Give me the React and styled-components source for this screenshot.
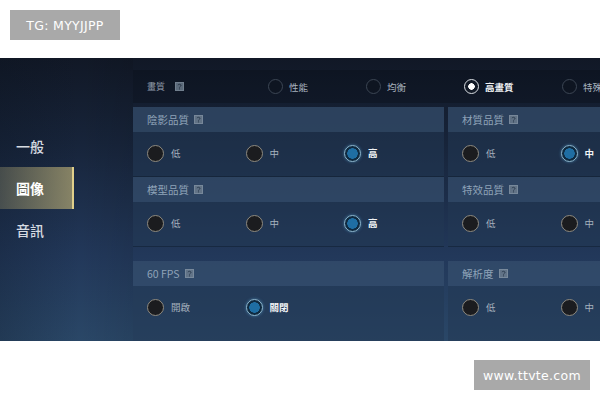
import styled, { createGlobalStyle } from 'styled-components';

const GlobalStyle = createGlobalStyle`
  html, body {
    margin: 0;
    padding: 0;
    background: #ffffff;
  }
  * {
    box-sizing: border-box;
  }
`;

const menu = [
  { label: '一般' },
  { label: '圖像', active: true },
  { label: '音訊' },
];

const topOptions = [
  { label: '性能' },
  { label: '均衡' },
  { label: '高畫質', active: true },
  { label: '特殊' },
];

const panels = [
  { title: '陰影品質', options: ['低', '中', '高'], selected: 2 },
  { title: '材質品質', options: ['低', '中'], selected: 1 },
  { title: '模型品質', options: ['低', '中', '高'], selected: 2 },
  { title: '特效品質', options: ['低', '中'], selected: -1 },
  { title: '60 FPS', options: ['開啟', '關閉'], selected: 1, gap: true },
  { title: '解析度', options: ['低', '中'], selected: -1, gap: true },
];

const HelpIcon = () => (
  <Help>
    <svg width="9" height="9" viewBox="0 0 9 9">
      <rect x="0.5" y="0.5" width="8" height="8" fill="#6f7f90" stroke="#8a99a8" />
      <path d="M3 3.2 C3 2 6 2 6 3.4 C6 4.4 4.5 4.4 4.5 5.6" stroke="#2b3a4a" strokeWidth="1" fill="none" />
      <rect x="4" y="6.4" width="1" height="1" fill="#2b3a4a" />
    </svg>
  </Help>
);

const App = () => {
  return (
    <>
      <GlobalStyle />
      <Page>
        <TopStrip>
          <Badge>TG: MYYJJPP</Badge>
        </TopStrip>
        <Game>
          <Sidebar>
            {menu.map((m) => (
              <MenuItem key={m.label} $active={m.active}>
                {m.label}
              </MenuItem>
            ))}
          </Sidebar>
          <Content>
            <TopRow>
              <TopLabel>
                畫質 <HelpIcon />
              </TopLabel>
              {topOptions.map((o) => (
                <TopOption key={o.label}>
                  <Ring $active={o.active} />
                  <OptionText $active={o.active}>{o.label}</OptionText>
                </TopOption>
              ))}
            </TopRow>
            <Panels>
              {panels.map((p) => (
                <Panel key={p.title} $gap={p.gap}>
                  <PanelHeader>
                    {p.title}
                    <HelpIcon />
                  </PanelHeader>
                  <PanelBody>
                    {p.options.map((o, i) => (
                      <Option key={o}>
                        <Radio $active={i === p.selected} />
                        <OptionText $active={i === p.selected}>{o}</OptionText>
                      </Option>
                    ))}
                  </PanelBody>
                </Panel>
              ))}
            </Panels>
          </Content>
        </Game>
        <BottomStrip>
          <Badge $wide>www.ttvte.com</Badge>
        </BottomStrip>
      </Page>
    </>
  );
};

export default App;

const Page = styled.div`
  width: 600px;
  height: 400px;
  display: flex;
  flex-direction: column;
  background: #ffffff;
  overflow: hidden;
`;

const TopStrip = styled.div`
  height: 58px;
  padding: 10px 0 0 10px;
`;

const BottomStrip = styled.div`
  flex: 1;
  display: flex;
  justify-content: flex-end;
  padding: 19px 10px 0 0;
`;

const Badge = styled.div`
  width: ${({ $wide }) => ($wide ? '116px' : '110px')};
  height: 30px;
  background: #a9a9a9;
  color: #ffffff;
  font-family: 'DejaVu Sans', 'Liberation Sans', sans-serif;
  font-size: 12.5px;
  font-weight: 500;
  display: flex;
  align-items: center;
  justify-content: center;
  letter-spacing: 0.3px;
`;

const Game = styled.div`
  height: 283px;
  display: grid;
  grid-template-columns: 133px 1fr;
  background: linear-gradient(180deg, #111826 0%, #17243a 30%, #22385a 70%, #2a4767 100%);
  overflow: hidden;
  font-family: 'Noto Sans CJK TC', 'Noto Sans', sans-serif;
`;

const Sidebar = styled.div`
  display: flex;
  flex-direction: column;
  padding-top: 67px;
  background: linear-gradient(90deg, rgba(10, 18, 30, 0.25) 0%, rgba(10, 18, 30, 0) 60%, rgba(0, 0, 0, 0.08) 100%);
`;

const MenuItem = styled.div`
  width: 74px;
  height: 42px;
  display: flex;
  align-items: center;
  padding-left: 16px;
  font-size: 14px;
  font-weight: ${({ $active }) => ($active ? 700 : 500)};
  color: ${({ $active }) => ($active ? '#ffffff' : '#d6dbe1')};
  background: ${({ $active }) =>
    $active ? 'linear-gradient(90deg, rgba(110, 110, 90, 0.55) 0%, rgba(170, 160, 112, 0.75) 100%)' : 'transparent'};
  border-right: ${({ $active }) => ($active ? '2px solid #e0cf8a' : '2px solid transparent')};
`;

const Content = styled.div`
  display: flex;
  flex-direction: column;
  padding-top: 12px;
`;

const TopRow = styled.div`
  height: 33px;
  display: flex;
  align-items: center;
  background: rgba(8, 14, 24, 0.35);
  padding-left: 14px;
`;

const TopLabel = styled.div`
  width: 121px;
  display: flex;
  align-items: center;
  gap: 5px;
  font-size: 9px;
  color: #8e99a6;
`;

const TopOption = styled.div`
  width: 98px;
  display: flex;
  align-items: center;
  gap: 6px;
  flex-shrink: 0;
`;

const Ring = styled.div`
  width: 15px;
  height: 15px;
  border-radius: 50%;
  border: 1.5px solid ${({ $active }) => ($active ? '#d9dde2' : '#3c4654')};
  background: ${({ $active }) =>
    $active ? 'radial-gradient(circle, #ffffff 0 3px, rgba(20, 28, 40, 0.6) 3.5px)' : 'rgba(14, 20, 30, 0.5)'};
  flex-shrink: 0;
`;

const Help = styled.span`
  display: inline-flex;
  margin-left: 5px;
  opacity: 0.8;
`;

const Panels = styled.div`
  display: grid;
  grid-template-columns: 311px 1fr;
  column-gap: 4px;
  margin-top: 4px;
`;

const Panel = styled.div`
  height: ${({ $gap }) => ($gap ? '90px' : '70px')};
  margin-top: ${({ $gap }) => ($gap ? '14px' : '0')};
  background: rgba(34, 56, 84, 0.55);
  border-bottom: 1px solid rgba(10, 20, 34, 0.4);
  display: flex;
  flex-direction: column;
`;

const PanelHeader = styled.div`
  height: 25px;
  display: flex;
  align-items: center;
  padding-left: 14px;
  font-size: 10.5px;
  color: #8fa3b8;
  background: rgba(74, 104, 138, 0.35);
`;

const PanelBody = styled.div`
  height: 42px;
  display: flex;
  align-items: center;
  padding-left: 14px;
`;

const Option = styled.div`
  width: 98.5px;
  display: flex;
  align-items: center;
  gap: 7px;
  flex-shrink: 0;
`;

const Radio = styled.div`
  width: 17px;
  height: 17px;
  border-radius: 50%;
  flex-shrink: 0;
  border: 1.5px solid ${({ $active }) => ($active ? '#8fb8cf' : '#8e8a80')};
  background: ${({ $active }) =>
    $active ? 'radial-gradient(circle, #1f6ea3 0 5px, #0f2a40 5.5px)' : '#1b1c1f'};
  box-shadow: ${({ $active }) => ($active ? '0 0 3px rgba(90, 170, 220, 0.6)' : 'none')};
`;

const OptionText = styled.span`
  font-size: 9.5px;
  font-weight: ${({ $active }) => ($active ? 700 : 400)};
  color: ${({ $active }) => ($active ? '#f2f4f6' : '#a6b1bd')};
`;
